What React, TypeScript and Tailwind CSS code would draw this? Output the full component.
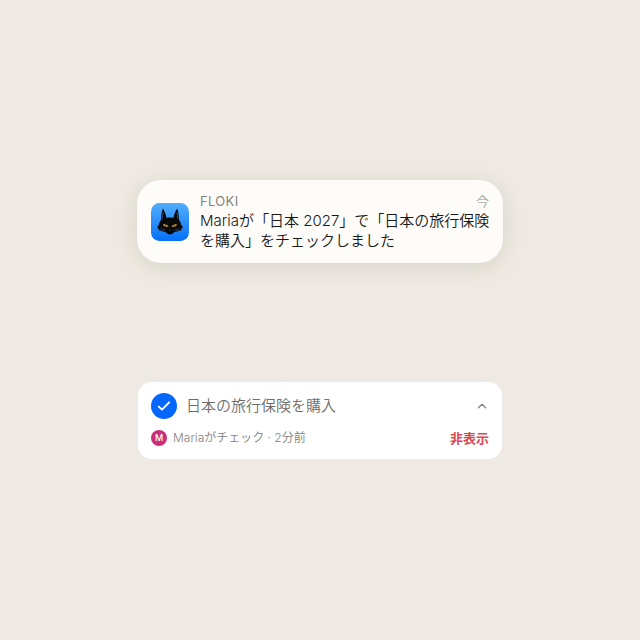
import { useState } from 'react';

function CatIcon() {
  return (
    <svg viewBox="0 0 38 38" className="mt-3 size-[38px] shrink-0" aria-hidden="true">
      <defs>
        <linearGradient id="sky" x1="0" y1="0" x2="0" y2="1">
          <stop offset="0" stopColor="#51aefc" />
          <stop offset="1" stopColor="#0570f9" />
        </linearGradient>
      </defs>
      <rect width="38" height="38" rx="8.5" fill="url(#sky)" />
      <path
        d="M11.9 5.4C10.6 8.6 10.1 12.6 10.2 16.6C8.9 18.4 7.9 20.6 7.6 22.6L5.9 23.6L7.3 24.2L6.2 25.6L8.2 26L7.8 27.4L10.4 27.7C11.8 28.8 13.6 29 15 29.2C16.2 30.8 17.6 31.4 19 31.4C20.4 31.4 21.8 30.8 23 29.2C24.4 29 26.2 28.8 27.6 27.7L30.2 27.4L29.8 26L31.8 25.6L30.7 24.2L32.1 23.6L30.4 22.6C30.1 20.6 29.1 18.4 27.8 16.6C27.9 12.6 27.4 8.6 26.2 5.4C24.3 8.2 23 11.6 22.4 15C20.2 14.4 17.8 14.4 15.6 15C15 11.6 13.8 8.2 11.9 5.4Z"
        fill="#08090b"
      />
      <path d="M12.2 9.4C11.5 11.6 11.4 13.6 11.6 15.4M25.9 9.4C26.6 11.6 26.6 13.6 26.4 15.4" stroke="#2c5b8d" strokeWidth="0.8" fill="none" />
      <path d="M11.8 21.4Q15 20.6 17.6 23.2Q13.6 24.8 11.8 21.4ZM26.2 21.4Q23 20.6 20.4 23.2Q24.4 24.8 26.2 21.4Z" fill="#e0a83c" />
      <path d="M14.7 21.8V23.2M23.3 21.8V23.2" stroke="#08090b" strokeWidth="0.7" />
      <path d="M9 25.6L14.6 27M29 25.6L23.4 27M9.8 27.2L14.4 28M28.2 27.2L23.6 28M17.8 27.6H20.2" stroke="#3a5068" strokeWidth="0.5" />
    </svg>
  );
}

function Notification() {
  return (
    <section className="flex w-full max-w-[366px] items-start gap-[11px] rounded-[24px] bg-[#fdfcf9] pt-[11px] pr-[11px] pb-3 pl-[14px] shadow-[0_4px_20px_rgba(80,90,50,0.14)]">
      <CatIcon />
      <div className="min-w-0 flex-1">
        <div className="flex justify-between pr-[3px] text-[13px] leading-5 text-[#858583]">
          <span className="tracking-wide">FLOKI</span>
          <span className="font-light">今</span>
        </div>
        <p className="text-[15px] leading-5 font-[350] text-[#181817]">
          Mariaが「日本 2027」で「日本の旅行保険を購入」をチェックしました
        </p>
      </div>
    </section>
  );
}

function TaskCard() {
  const [checked, setChecked] = useState(true);

  return (
    <section className="w-full max-w-[364px] rounded-[14px] bg-white px-[13px] pt-[11px] pb-[13px]">
      <div className="flex h-[26px] items-center">
        <label className="flex items-center gap-[9px] text-[15px] leading-[26px] font-[350] text-[#6f6d6a]">
          <span className="relative grid size-[26px] place-items-center rounded-full bg-[#0566fb]">
            <input
              type="checkbox"
              checked={checked}
              onChange={(e) => setChecked(e.target.checked)}
              className="absolute inset-0 size-full cursor-pointer appearance-none rounded-full"
            />
            {checked && (
              <svg viewBox="0 0 14 14" className="pointer-events-none size-[14px]" fill="none" stroke="white" strokeWidth="1.9" strokeLinecap="round" strokeLinejoin="round" aria-hidden="true">
                <path d="M1.8 7.6L5 10.6L12.2 3.4" />
              </svg>
            )}
          </span>
          日本の旅行保険を購入
        </label>
        <button type="button" aria-label="閉じる" className="ml-auto grid size-[14px] place-items-center text-[#85837f]">
          <svg viewBox="0 0 14 14" className="size-[14px]" fill="none" stroke="currentColor" strokeWidth="1.3" strokeLinecap="round" strokeLinejoin="round">
            <path d="M3.4 8.8L7 5.2L10.6 8.8" />
          </svg>
        </button>
      </div>
      <div className="mt-[11px] flex h-4 items-center">
        <span className="grid size-4 place-items-center rounded-full bg-[#cb2d78] text-[9px] leading-4 font-medium text-white">M</span>
        <span className="ml-[6px] text-[12px] leading-4 font-[350] text-[#83817d]">Mariaがチェック · 2分前</span>
        <button type="button" className="ml-auto text-[13px] leading-4 font-bold text-[#dc4650]">
          非表示
        </button>
      </div>
    </section>
  );
}

export default function App() {
  return (
    <main
      lang="ja"
      className="flex min-h-screen flex-col items-center justify-center gap-[119px] bg-[#eee9e2] px-4 pb-px font-['Inter','Noto_Sans_CJK_JP',sans-serif] antialiased"
    >
      <Notification />
      <TaskCard />
    </main>
  );
}
